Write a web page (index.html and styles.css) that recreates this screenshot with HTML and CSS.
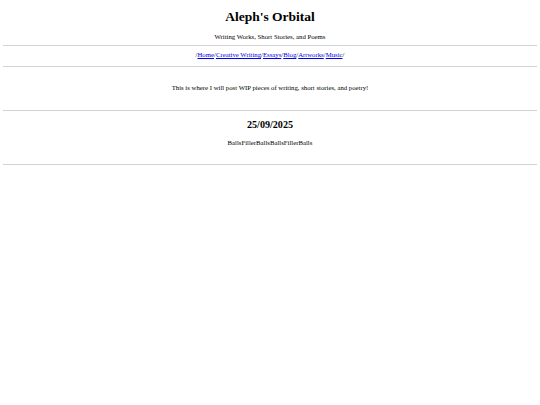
FILE: index.html
```html
<!doctype html>
<html>
    <head>
        <meta charset="UTF-8">
        <title>Aleph's Orbital</title>
        <link rel="stylesheet" href="styles.css">
    </head>
    <body>
        <header class="masthead">
            <h1 class="title">Aleph's Orbital</h1>
            <p class="tagline">Writing Works, Short Stories, and Poems</p>
        </header>
        <hr class="rule rule-top">
        <nav class="nav">/<a href="#">Home</a>/<a href="#">Creative Writing</a>/<a href="#">Essays</a>/<a href="#">Blog</a>/<a href="#">Artworks</a>/<a href="#">Music</a>/</nav>
        <hr class="rule rule-nav">
        <p class="intro">This is where I will post WIP pieces of writing, short stories, and poetry!</p>
        <hr class="rule rule-intro">
        <article class="post">
            <h2 class="post-date">25/09/2025</h2>
            <p class="post-body">BallsFillerBallsBallsFillerBalls</p>
        </article>
        <hr class="rule rule-end">
    </body>
</html>
```
FILE: styles.css
```css
*{
  margin:0;
  padding:0;
}
body{
  padding:8.6px 3.4px 0;
  font-family:"Liberation Serif","Times New Roman",serif;
  font-size:6.75px;
  line-height:7.76px;
  color:#000;
  background:#fff;
  text-align:center;
}
.title{
  font-size:13.5px;
  line-height:15.5px;
  font-weight:bold;
}
.tagline{
  margin-top:9.3px;
}
.rule{
  border:0;
  border-top:1px solid #d2d2d2;
  height:0;
}
.rule-top{ margin-top:3.4px; }
.nav{ margin-top:5.5px; }
.nav a{
  color:#0000ee;
  text-decoration:underline;
}
.rule-nav{ margin-top:6.8px; }
.intro{ margin-top:17.3px; }
.rule-intro{ margin-top:18.1px; }
.post-date{
  margin-top:8.6px;
  font-size:10.125px;
  line-height:11.63px;
  font-weight:bold;
}
.post-body{ margin-top:7.6px; }
.rule-end{ margin-top:17.6px; }
```
